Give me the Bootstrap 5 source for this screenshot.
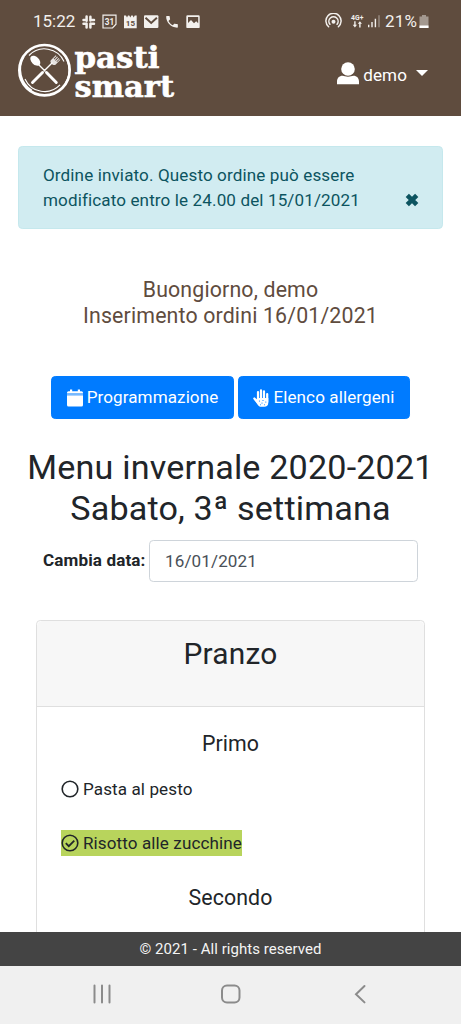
<!DOCTYPE html>
<html lang="it">
<head>
<meta charset="utf-8">
<meta name="viewport" content="width=device-width, initial-scale=1">
<title>Pasti Smart</title>
<link href="https://cdn.jsdelivr.net/npm/bootstrap@5.3.0/dist/css/bootstrap.min.css" rel="stylesheet">
<style>
html{font-size:17.07px}
body{font-family:Roboto,"Noto Sans",sans-serif;color:#212529;height:1024px;overflow:hidden}
svg{display:block;flex:none}
.top-area{background:#5f4c3e;height:116px;color:#fff}
.status-row{height:41px;padding:2px 32px 0 33px;color:#f3f0ed}
.status-row .clock{font-size:17px;line-height:39px;width:49px}
.status-row .charge{font-size:17px;margin-left:3px;width:34px;line-height:39px;white-space:nowrap}
.brand-row{height:75px;padding:0 33px 0 17px}
.user-link{color:#fff;text-decoration:none;margin-top:-7px;line-height:26px;letter-spacing:.1px}
.user-link::after{border-top-width:6px;border-left-width:6px;border-right-width:6px;margin-left:9px;margin-top:-5px}
.page-body{height:816px;overflow:hidden}
.order-alert{margin:30px 18px 0;height:83px;padding:15.5px 22px 0 24px;background:#d1ecf1;border:1px solid #c5e8ed;color:#0c5460;border-radius:4.3px;line-height:25.6px;font-size:17.07px;letter-spacing:.12px}
.greeting{margin-top:48px;font-size:21.34px;line-height:25.6px;color:#5f4c3e;height:51px;letter-spacing:.15px}
.actions{margin-top:48px;gap:4px}
.actions .btn{background:#007bff;border-color:#007bff;height:43px;border-radius:4.3px;padding:0;font-size:17.07px;letter-spacing:.09px}
.menu-title{font-size:34.14px;line-height:41.2px;margin:28px 0 10px;height:83px;font-weight:400;letter-spacing:.17px}
.date-row label{font-weight:700;width:106px;letter-spacing:.12px}
.date-row .form-control{width:269px;height:42px;border-color:#ced4da;border-radius:4.3px;color:#495057;padding:0 15px;font-size:17.07px;letter-spacing:.12px}
.meal{margin:38px 36px 0;border-color:#dfdfdf;border-radius:4.3px;height:400px}
.meal .card-header{height:86px;padding:13px 0;background:#f7f7f7;border-color:#dfdfdf}
.meal h3{font-size:29.87px;line-height:40px;font-weight:400;margin:0;letter-spacing:.2px}
.meal h5{font-size:21.34px;line-height:26px;font-weight:400;margin:0;letter-spacing:.1px}
.dish{line-height:26px;width:max-content;letter-spacing:.1px}
.chosen{background:#b8d45c}
.copy-bar{background:#444;color:#f4f4f4;height:34px;font-size:15px;line-height:34px;letter-spacing:.05px}
.sys-nav{background:#f0f0f0;height:58px}
</style>
</head>
<body class="bg-white">
<header class="top-area">
  <div class="status-row d-flex align-items-center justify-content-between">
    <div class="d-flex align-items-center">
      <span class="clock">15:22</span>
      <svg width="119" height="16" viewBox="82 13 119 16" fill="#f3f0ed">
        <g fill="none" stroke="#f3f0ed" stroke-width="2.5" stroke-linecap="round">
          <path d="M86.600 15.500v4.200M90.400 15.800v3.600M83.500 18.900h3M91 18.900h3M83.500 22.700h3M90.600 22.700h3.400M86.600 22.800v3.800M90.400 22.800v3.800"/>
        </g>
        <path d="M103 14.200h13v9l-3.500 3.800H103z" fill="none" stroke="#f3f0ed" stroke-width="1.200"/>
        <text x="109.400" y="24" font-size="8.200" font-weight="700" text-anchor="middle">31</text>
        <path d="M124 14.500h2l1 2 1-2h1.300l1 2 1-2h1.400l1 2 1-2h2v12.800H124z"/>
        <text x="130.400" y="24.800" font-size="8" font-weight="700" text-anchor="middle" fill="#5f4c3e">15</text>
        <rect x="144" y="14.300" width="14.400" height="12.800" rx="1"/>
        <path d="M145.500 16.800l5.700 5.100 5.700-5.100" fill="none" stroke="#5f4c3e" stroke-width="2"/>
        <path transform="translate(164.200 13) scale(.65)" d="M6.620 10.790c1.440 2.830 3.760 5.140 6.590 6.590l2.200-2.200c.27-.27.67-.36 1.020-.24 1.120.37 2.330.57 3.570.57.55 0 1 .45 1 1V20c0 .55-.45 1-1 1C10.600 21 3 13.400 3 4c0-.55.45-1 1-1h3.500c.55 0 1 .45 1 1 0 1.250.2 2.450.57 3.570.11.35.03.74-.25 1.020z"/>
        <path fill-rule="evenodd" d="M187.500 14.200h11a1.200 1.200 0 0 1 1.200 1.200v10.500a1.200 1.200 0 0 1-1.200 1.200h-11a1.200 1.200 0 0 1-1.200-1.200V15.400a1.200 1.200 0 0 1 1.200-1.200zM188 16v6l3-3 3 3.200 2.200-2 2 2V16z"/>
      </svg>
    </div>
    <div class="d-flex align-items-center">
      <svg width="58" height="18" viewBox="324 12.800 58 18" fill="#f3f0ed">
        <g fill="none" stroke="#f3f0ed" stroke-width="1.500" stroke-linecap="round">
          <path d="M328.600 26.500a7.600 7.600 0 1 1 9.800 0M329.900 24.100a4.600 4.600 0 1 1 7.200 0"/>
        </g>
        <circle cx="333.500" cy="21.500" r="2"/>
        <text x="351" y="19.800" font-size="6.800" font-weight="700" textLength="12.500">4G+</text>
        <path d="M354.200 21h1.400v3.600h1.400l-2.100 2.600-2.100-2.600h1.400zM359.200 27.200h1.400v-3.600h1.400l-2.100-2.600-2.100 2.600h1.400z"/>
        <path d="M368 24.500h1.400V27H368zM371.300 21.700h1.400V27h-1.400zM374.700 18.500h1.400V27h-1.400z"/>
        <path d="M378.300 15h1.400v12h-1.400z" opacity=".4"/>
      </svg>
      <span class="charge" style="letter-spacing:.2px">21%</span>
      <svg width="10" height="14" viewBox="0 0 10 14"><path d="M3 0h4v1.500h2.500V13H.5V1.500H3z" fill="#a3988f"/><path d="M.5 10.500h9V13h-9z" fill="#fff"/></svg>
    </div>
  </div>
  <div class="brand-row d-flex justify-content-between align-items-center">
    <svg width="160" height="75" viewBox="17 41 160 75" fill="#fff">
      <g fill="none" stroke="#fff">
        <circle cx="44.500" cy="70.200" r="25.200" stroke-width="2.600"/>
        <path d="M29 55.500a21.400 21.400 0 0 1 35 6M60 84.900a21.400 21.400 0 0 1-35-6" stroke-width="1.100"/>
        <path d="M23.800 56.500a25 25 0 0 0 8 34M65.200 84a25 25 0 0 0-7.500-35" stroke-width="1.800"/>
        <path d="M37.500 63.500L45 71M52 63L44 71" stroke-width="1.400" stroke-linecap="round"/>
        <path d="M46.500 72.500L56.300 82.500M42.500 72.500L32.500 82.500" stroke-width="2.900" stroke-linecap="round"/>
      </g>
      <ellipse cx="35.300" cy="60.700" rx="3.800" ry="6" transform="rotate(-45 35.300 60.700)"/>
      <g transform="translate(54 61.200) rotate(45)" opacity=".85"><path d="M-3-5.500h1v4h1v-4h1v4h1v-4h1v4h.8v-4h.8V1.500C3.200 4-3 4-3 1.500z"/></g>
      <g font-family="DejaVu Serif,serif" font-size="30" font-weight="700" stroke="#fff" stroke-width=".6">
        <text x="74.500" y="68.300" textLength="85" lengthAdjust="spacingAndGlyphs">pasti</text>
        <text x="74.500" y="96.800" textLength="99.500" lengthAdjust="spacingAndGlyphs">smart</text>
      </g>
    </svg>
    <a class="user-link dropdown-toggle d-flex align-items-center" href="#">
      <svg width="22" height="23" viewBox="0 0 22 23" fill="#fff" style="margin-right:4px;margin-top:-4px"><circle cx="11" cy="7" r="6.800"/><path d="M0 22.300v-2.800c0-3.300 2.200-5.700 5.600-5.700 1.800 0 2.800 1 5.400 1s3.600-1 5.400-1c3.400 0 5.600 2.400 5.600 5.700v2.800z"/></svg>demo</a>
  </div>
</header>
<main class="page-body">
  <div class="order-alert d-flex justify-content-between">
    <div>Ordine inviato. Questo ordine può essere<br>modificato entro le 24.00 del 15/01/2021</div>
    <svg width="16" height="14" viewBox="0 0 16 14" style="margin-top:30.5px"><path d="M3.300 2.300l9.400 9.400M12.700 2.300l-9.400 9.400" stroke="#0c5460" stroke-width="4.600"/></svg>
  </div>
  <div class="greeting text-center">Buongiorno, demo<br>Inserimento ordini 16/01/2021</div>
  <div class="actions d-flex justify-content-center">
    <button class="btn btn-primary d-flex align-items-center justify-content-center" style="width:183px"><svg width="16" height="18" viewBox="0 0 16 18" style="margin-right:4px"><path d="M0 4.500V3.800q0-1.500 1.500-1.500H3V.4h2.200v1.900h5.600V.4H13v1.900h1.500q1.500 0 1.500 1.500v.7zM0 6.300h16v9.800q0 1.500-1.500 1.500h-13Q0 17.600 0 16.100z" fill="#fff"/><path d="M0 4.500h16v1.800H0z" fill="#75b8ff"/></svg>Programmazione</button>
    <button class="btn btn-primary d-flex align-items-center justify-content-center" style="width:172px"><svg width="16" height="18" viewBox="0 0 16 18" style="margin-right:4px"><g stroke="#fff" stroke-width="2.200" stroke-linecap="round" fill="none"><path d="M5 3v8M8 1.300v10M11 2.300v9M14.200 5v8M1.300 9.500L5.500 14"/></g><path d="M4 9h11.300v4.500c0 3-1.500 4.300-4 4.300H8.500c-2 0-3-.8-4-2.300L1 10.500l2-1 1.500 1.500z" fill="#fff"/><g fill="#007bff"><circle cx="6.500" cy="12" r=".6"/><circle cx="10" cy="11.500" r=".6"/><circle cx="12.800" cy="13" r=".6"/><circle cx="9" cy="14" r=".6"/><circle cx="11.500" cy="15.800" r=".5"/><circle cx="7.500" cy="15.800" r=".5"/></g></svg>Elenco allergeni</button>
  </div>
  <h2 class="menu-title text-center">Menu invernale 2020-2021<br>Sabato, 3ª settimana</h2>
  <div class="date-row d-flex align-items-center justify-content-center">
    <label for="data">Cambia data:</label><input id="data" class="form-control" value="16/01/2021">
  </div>
  <section class="card meal">
    <div class="card-header text-center"><h3>Pranzo</h3></div>
    <div class="card-body" style="padding:24px 24px 0">
      <h5 class="text-center">Primo</h5>
      <div class="dish d-flex align-items-center" style="margin-top:19px"><svg width="18" height="18" viewBox="0 0 18 18" style="margin-right:4px"><circle cx="9" cy="9" r="7.800" fill="none" stroke="#212529" stroke-width="1.600"/></svg>Pasta al pesto</div>
      <div class="dish chosen d-flex align-items-center" style="margin-top:28px"><svg width="18" height="18" viewBox="0 0 18 18" style="margin-right:4px"><circle cx="9" cy="9" r="7.800" fill="none" stroke="#212529" stroke-width="1.600"/><path d="M4.800 9.200l3 3 5.500-5.500" fill="none" stroke="#212529" stroke-width="1.800"/></svg>Risotto alle zucchine</div>
      <h5 class="text-center" style="margin-top:29px">Secondo</h5>
    </div>
  </section>
</main>
<footer>
  <div class="copy-bar text-center">© 2021 - All rights reserved</div>
  <div class="sys-nav">
    <svg width="461" height="58" viewBox="0 966 461 58" fill="none" stroke="#8b8b8b" stroke-width="2"><path d="M94.500 985.500v17M102 985.500v17M109.500 985.500v17" stroke-linecap="round"/><rect x="222" y="985.500" width="17.500" height="17" rx="5"/><path d="M364.500 986l-8.500 8.200 8.500 8.200" stroke-linecap="round"/></svg>
  </div>
</footer>
<script src="https://cdn.jsdelivr.net/npm/bootstrap@5.3.0/dist/js/bootstrap.bundle.min.js"></script>
</body>
</html>
